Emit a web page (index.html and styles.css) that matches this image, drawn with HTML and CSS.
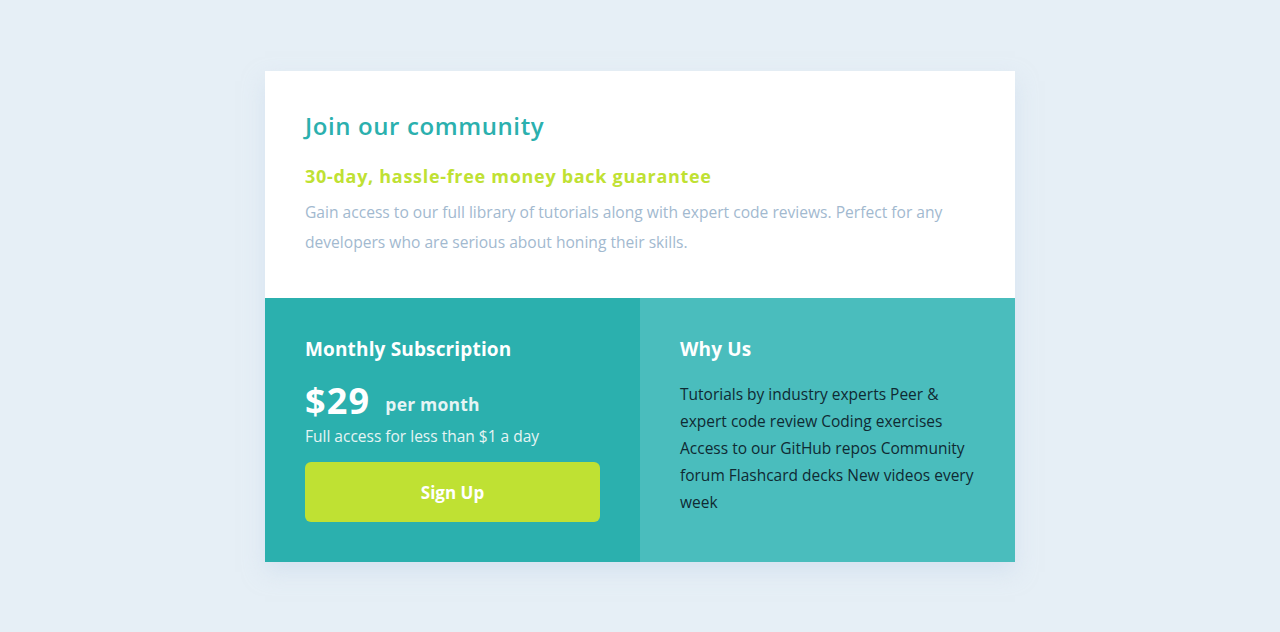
FILE: index.html
```html
<!DOCTYPE html>
<html lang="en">
<head>
<meta charset="utf-8">
<title>Single price grid</title>
<link rel="stylesheet" href="styles.css">
</head>
<body>
<main class="card">
  <section class="intro">
    <h1 class="intro-title">Join our community</h1>
    <h2 class="intro-sub">30-day, hassle-free money back guarantee</h2>
    <p class="intro-text">Gain access to our full library of tutorials along with expert code reviews. Perfect for any developers who are serious about honing their skills.</p>
  </section>
  <div class="bottom">
    <section class="sub">
      <h3 class="panel-title">Monthly Subscription</h3>
      <div class="price"><span class="amount">$29</span><span class="per">per month</span></div>
      <p class="access">Full access for less than $1 a day</p>
      <button class="signup">Sign Up</button>
    </section>
    <section class="why">
      <h3 class="panel-title">Why Us</h3>
      <p class="why-list">Tutorials by industry experts Peer &amp; expert code review Coding exercises Access to our GitHub repos Community forum Flashcard decks New videos every week</p>
    </section>
  </div>
</main>
</body>
</html>
```
FILE: styles.css
```css
* { box-sizing: border-box; }
html, body { margin: 0; padding: 0; }
body {
  background: #e6eff6;
  font-family: "Open Sans", "Liberation Sans", sans-serif;
  min-height: 632px;
  display: flex;
  justify-content: center;
  padding-top: 71px;
}
.card {
  width: 750px;
  align-self: flex-start;
  box-shadow: 0 10px 20px rgba(200, 215, 235, 0.5);
}
.intro {
  background: #fff;
  padding: 40px 40px 0;
  height: 227px;
}
.intro-title {
  margin: 0;
  color: #2bb0ae;
  font-size: 24px;
  font-weight: 600;
  letter-spacing: 0.6px;
  line-height: 30px;
}
.intro-sub {
  margin: 23px 0 0;
  color: #bfe133;
  font-size: 18px;
  font-weight: 700;
  letter-spacing: 0.7px;
  line-height: 24px;
}
.intro-text {
  margin: 9px 0 0;
  color: #a2b9cf;
  font-size: 15.6px;
  line-height: 30px;
}
.bottom {
  display: grid;
  grid-template-columns: 1fr 1fr;
  height: 264px;
}
.sub {
  background: #2bb0ae;
  padding: 37px 40px 40px;
  color: #fff;
}
.why {
  background: #4abdbd;
  padding: 37px 40px 40px;
  color: #fff;
}
.panel-title {
  margin: 0;
  font-size: 19px;
  font-weight: 700;
  letter-spacing: 0.15px;
  line-height: 28px;
}
.price {
  display: flex;
  align-items: center;
  margin-top: 18px;
  height: 38px;
}
.amount {
  font-size: 36px;
  font-weight: 700;
  letter-spacing: 1.2px;
}
.per {
  margin-left: 15px;
  margin-top: 8px;
  font-size: 17.5px;
  font-weight: 700;
  letter-spacing: 0.2px;
  color: #e6f4f4;
}
.access {
  margin: 6px 0 0;
  font-size: 15.5px;
  line-height: 22px;
  color: #e6f4f4;
}
.signup {
  display: block;
  width: 100%;
  height: 60px;
  margin-top: 15px;
  border: 0;
  border-radius: 6px;
  background: #bfe133;
  color: #fff;
  font-family: inherit;
  font-size: 17px;
  font-weight: 700;
}
.why-list {
  margin: 18px 0 0;
  color: #0f2a33;
  font-size: 15.5px;
  line-height: 27px;
}
```
